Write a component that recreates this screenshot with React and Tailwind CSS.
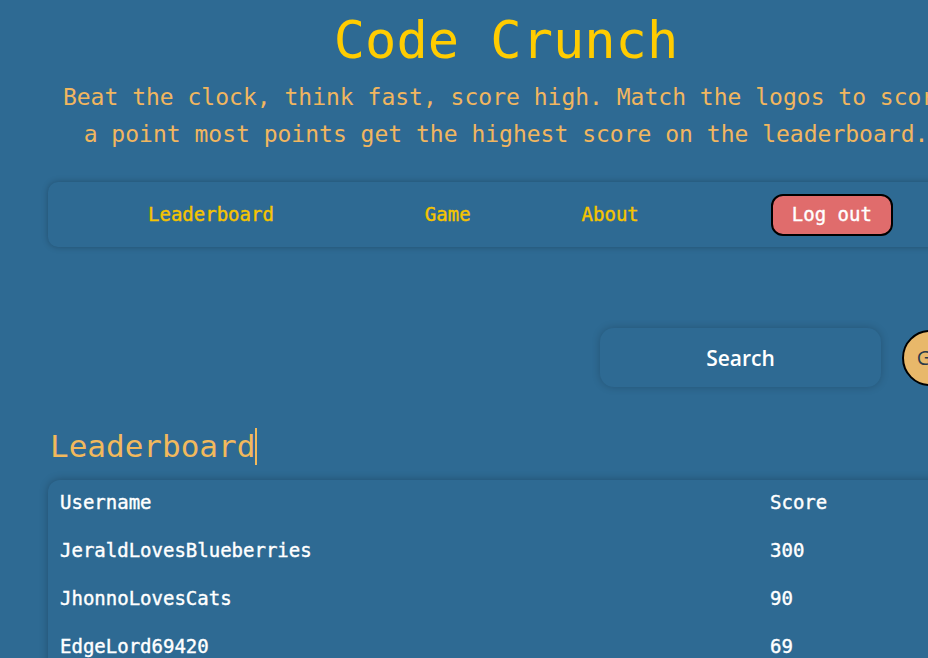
import { useState } from 'react';

// static leaderboard rows
const scores = [
  { username: 'JeraldLovesBlueberries', score: 300 },
  { username: 'JhonnoLovesCats', score: 90 },
  { username: 'EdgeLord69420', score: 69 },
  { username: 'NoobMaster', score: 42 },
];

const mono = "font-['DejaVu_Sans_Mono','Liberation_Mono',monospace]";

export default function App() {
  const [query, setQuery] = useState('');

  return (
    <div className="w-full h-[658px] overflow-hidden bg-[#2e6a93]">
      <div className={`w-[1012px] px-12 ${mono}`}>
        {/* --- HEADER --- */}
        <h1 className="pt-[14px] text-center text-[52px] leading-none text-[#ffcc00]">Code Crunch</h1>
        <p className="mx-auto mt-[13px] w-[900px] text-center text-[23px] leading-[37px] text-[#f1b65f]">
          Beat the clock, think fast, score high. Match the logos to score a point most points get the highest score on the leaderboard.
        </p>

        {/* --- NAV --- */}
        <nav className="mt-[29px] h-[65px] rounded-[10px] bg-[#2e6a93] shadow-[0_0_6px_rgba(0,0,0,0.25)] flex items-center pl-[100px] text-[19px] text-[#f5c400] [-webkit-text-stroke:0.4px]">
          <a href="#">Leaderboard</a>
          <a href="#" className="ml-[151px]">Game</a>
          <a href="#" className="ml-[111px]">About</a>
          <button className="ml-[132px] h-[42px] px-[19px] rounded-[12px] border-2 border-black bg-[#e06c6c] text-white">
            Log out
          </button>
        </nav>

        {/* --- SEARCH --- */}
        <div className="mt-[81px] flex items-center justify-end pr-[6px] gap-[21px]">
          <input
            value={query}
            onChange={(e) => setQuery(e.target.value)}
            placeholder="Search"
            className="w-[281px] h-[59px] rounded-[14px] bg-[#2e6a93] shadow-[0_0_8px_rgba(0,0,0,0.2)] text-center text-[21px] font-semibold text-white placeholder:text-white outline-none font-['Open_Sans',sans-serif]"
          />
          <button className="w-[56px] h-[56px] rounded-full border-2 border-black bg-[#e8b86a] text-[20px] text-[#2b3a4a] font-['Open_Sans',sans-serif]">
            Go
          </button>
        </div>

        {/* --- LEADERBOARD --- */}
        <h2 className="mt-[41px] ml-[2px] inline-block border-r-2 border-[#f2b95c] text-[31px] leading-[37px] text-[#f2b95c]">
          Leaderboard
        </h2>
        <div className="mt-[15px] rounded-[12px] bg-[#2e6a93] shadow-[0_0_8px_rgba(0,0,0,0.25)] px-3 text-[19px] leading-[22px] text-white [-webkit-text-stroke:0.4px]">
          <div className="flex h-12 pt-[11px]">
            <span className="w-[710px]">Username</span>
            <span>Score</span>
          </div>
          {scores.map((row) => (
            <div key={row.username} className="flex h-12 pt-[11px]">
              <span className="w-[710px]">{row.username}</span>
              <span>{row.score}</span>
            </div>
          ))}
        </div>
      </div>
    </div>
  );
}
